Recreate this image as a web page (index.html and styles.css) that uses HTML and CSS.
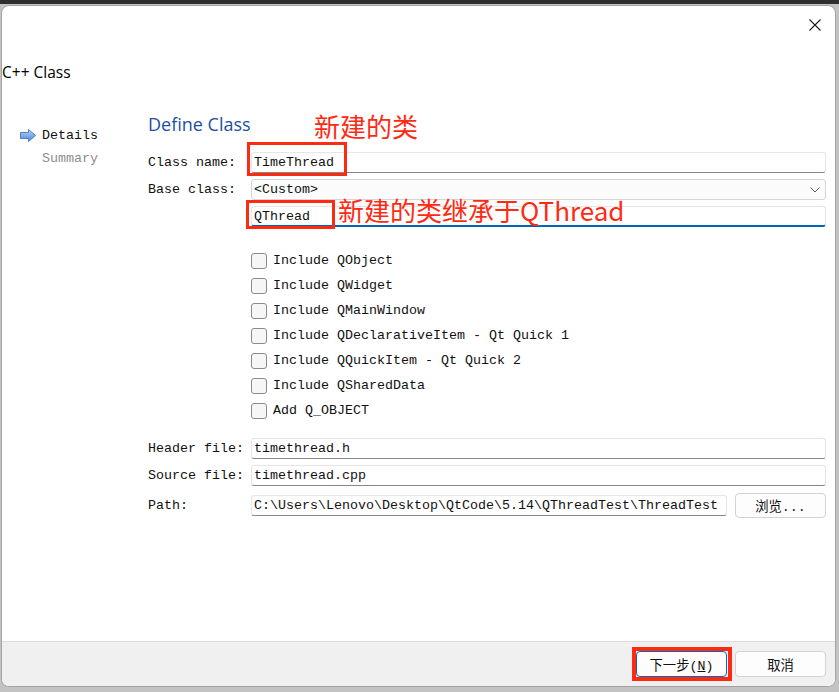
FILE: index.html
```html
<!DOCTYPE html>
<html>
<head>
<meta charset="utf-8">
<link rel="stylesheet" href="styles.css">
</head>
<body>
<div class="topbar"></div>
<div class="window">
  <div class="titlebar">
    <svg class="close" width="12" height="12" viewBox="0 0 12 12"><path d="M0.5 0.5 L11.5 11.5 M11.5 0.5 L0.5 11.5" stroke="#1b1b1b" stroke-width="1.1" fill="none"/></svg>
  </div>
  <div class="page-title">C++ Class</div>
  <div class="main">
    <div class="sidebar">
      <div class="step active">
        <svg class="arrow" width="16" height="13" viewBox="0 0 16 13">
          <defs><linearGradient id="g" x1="0" y1="0" x2="0" y2="1"><stop offset="0" stop-color="#b9d5f5"/><stop offset="1" stop-color="#4a86d6"/></linearGradient></defs>
          <polygon points="0.5,3.5 8.5,3.5 8.5,0.5 15.5,6.5 8.5,12.5 8.5,9.5 0.5,9.5" fill="url(#g)" stroke="#4d7fc8" stroke-width="1"/>
        </svg>
        <span>Details</span>
      </div>
      <div class="step muted"><span>Summary</span></div>
    </div>
    <div class="content">
      <div class="heading">Define Class</div>
      <div class="form">
        <label class="lbl">Class name:</label>
        <div class="input">TimeThread</div>
        <label class="lbl">Base class:</label>
        <div class="input combo"><span>&lt;Custom&gt;</span>
          <svg width="10" height="6" viewBox="0 0 10 6"><polyline points="0.5,0.5 5,5 9.5,0.5" fill="none" stroke="#5a5a5a" stroke-width="1"/></svg>
        </div>
        <span></span>
        <div class="input focus">QThread</div>
      </div>
      <div class="checks">
        <div class="check"><span class="box"></span>Include QObject</div>
        <div class="check"><span class="box"></span>Include QWidget</div>
        <div class="check"><span class="box"></span>Include QMainWindow</div>
        <div class="check"><span class="box"></span>Include QDeclarativeItem - Qt Quick 1</div>
        <div class="check"><span class="box"></span>Include QQuickItem - Qt Quick 2</div>
        <div class="check"><span class="box"></span>Include QSharedData</div>
        <div class="check"><span class="box"></span>Add Q_OBJECT</div>
      </div>
      <div class="form files">
        <label class="lbl">Header file:</label>
        <div class="input">timethread.h</div>
        <label class="lbl">Source file:</label>
        <div class="input">timethread.cpp</div>
        <label class="lbl">Path:</label>
        <div class="pathrow">
          <div class="input path">C:\Users\Lenovo\Desktop\QtCode\5.14\QThreadTest\ThreadTest</div>
          <button class="btn browse">浏览...</button>
        </div>
      </div>
    </div>
  </div>
  <div class="footer">
    <button class="btn default">下一步(<u>N</u>)</button>
    <button class="btn">取消</button>
  </div>
  <div class="note note1">新建的类</div>
  <div class="note note2">新建的类继承于QThread</div>
  <div class="redbox box1"></div>
  <div class="redbox box2"></div>
  <div class="redbox box3"></div>
</div>
</body>
</html>
```
FILE: styles.css
```css
* { box-sizing: border-box; }
html, body { margin: 0; padding: 0; }
body {
  width: 839px;
  height: 692px;
  background: #c3c3c3;
  overflow: hidden;
  font-family: "Liberation Mono", "Noto Sans CJK SC", monospace;
  font-size: 13.33px;
  color: #111;
}
.topbar {
  height: 4px;
  background: #2e2e2e;
}
.window {
  position: relative;
  margin: 1px 0 0 1px;
  width: 835px;
  height: 682px;
  background: #fff;
  border: 1px solid #a3a3a3;
  border-radius: 8px;
  overflow: hidden;
  display: flex;
  flex-direction: column;
}
.titlebar {
  height: 56px;
  display: flex;
  justify-content: flex-end;
  align-items: flex-start;
  padding: 13px 14px 0 0;
}
.page-title {
  font-family: "Open Sans", "Noto Sans", sans-serif;
  font-size: 15.5px;
  line-height: 20px;
  height: 20px;
  color: #000;
}
.main {
  margin-top: 31px;
  display: flex;
  flex: 1;
}
.sidebar {
  width: 146px;
  padding: 12px 0 0 18px;
  flex-shrink: 0;
}
.step {
  display: flex;
  align-items: center;
  height: 20px;
  margin-bottom: 3px;
}
.step .arrow { margin-right: 6px; }
.step.muted { padding-left: 22px; color: #8d8d8d; }
.content {
  flex: 1;
  padding-right: 9px;
}
.heading {
  font-family: "Open Sans", "Noto Sans", sans-serif;
  font-size: 18px;
  line-height: 23px;
  height: 23px;
  color: #1e4fa6;
}
.form {
  margin-top: 16px;
  display: grid;
  grid-template-columns: 103px 1fr;
  row-gap: 6px;
  align-items: center;
}
.lbl { white-space: nowrap; }
.input {
  height: 21px;
  background: #fff;
  border: 1px solid #e6e6e6;
  border-bottom-color: #878787;
  border-radius: 3px;
  padding: 0 0 0 2px;
  display: flex;
  align-items: center;
  white-space: nowrap;
  overflow: hidden;
}
.input.combo {
  background: #fbfbfb;
  border: 1px solid #d5d5d5;
  justify-content: space-between;
  padding-right: 5px;
}
.input.focus {
  border-bottom: 2px solid #0064b8;
}
.checks {
  margin: 21px 0 0 103px;
}
.check {
  height: 25px;
  display: flex;
  align-items: center;
}
.box {
  width: 16px;
  height: 16px;
  border: 1px solid #8b8b8b;
  border-radius: 3px;
  background: #f6f6f6;
  margin-right: 6px;
  flex-shrink: 0;
}
.form.files { margin-top: 15px; }
.pathrow {
  display: flex;
  align-items: center;
  gap: 8px;
  height: 25px;
  margin-top: 1px;
}
.input.path {
  width: 476px;
  flex-shrink: 0;
}
.btn {
  font-family: "Liberation Mono", "Noto Sans CJK SC", monospace;
  font-size: 13.33px;
  color: #111;
  background: #fdfdfd;
  border: 1px solid #d3d3d3;
  border-radius: 4px;
  height: 25px;
  padding: 0;
}
.browse { width: 91px; }
.footer {
  height: 45px;
  border-top: 1px solid #dcdcdc;
  background: #f0f0f0;
  display: flex;
  justify-content: flex-end;
  align-items: center;
  gap: 8px;
  padding: 0 9px 0 0;
}
.footer .btn {
  width: 91px;
  height: 26px;
}
.footer .btn.default {
  border: 1px solid #0067c0;
}
.note {
  position: absolute;
  font-family: "Noto Sans CJK SC", "Noto Sans", sans-serif;
  font-size: 26px;
  line-height: 30px;
  color: #ff2a12;
  white-space: nowrap;
}
.note1 { left: 312px; top: 105px; }
.note2 { left: 336px; top: 189px; }
.redbox {
  position: absolute;
  border: 3px solid #ff2a12;
}
.box1 { left: 245px; top: 136px; width: 100px; height: 34px; }
.box2 { left: 244px; top: 194px; width: 89px; height: 29px; }
.box3 { left: 630px; top: 641px; width: 100px; height: 34px; border-width: 4px; }
```
